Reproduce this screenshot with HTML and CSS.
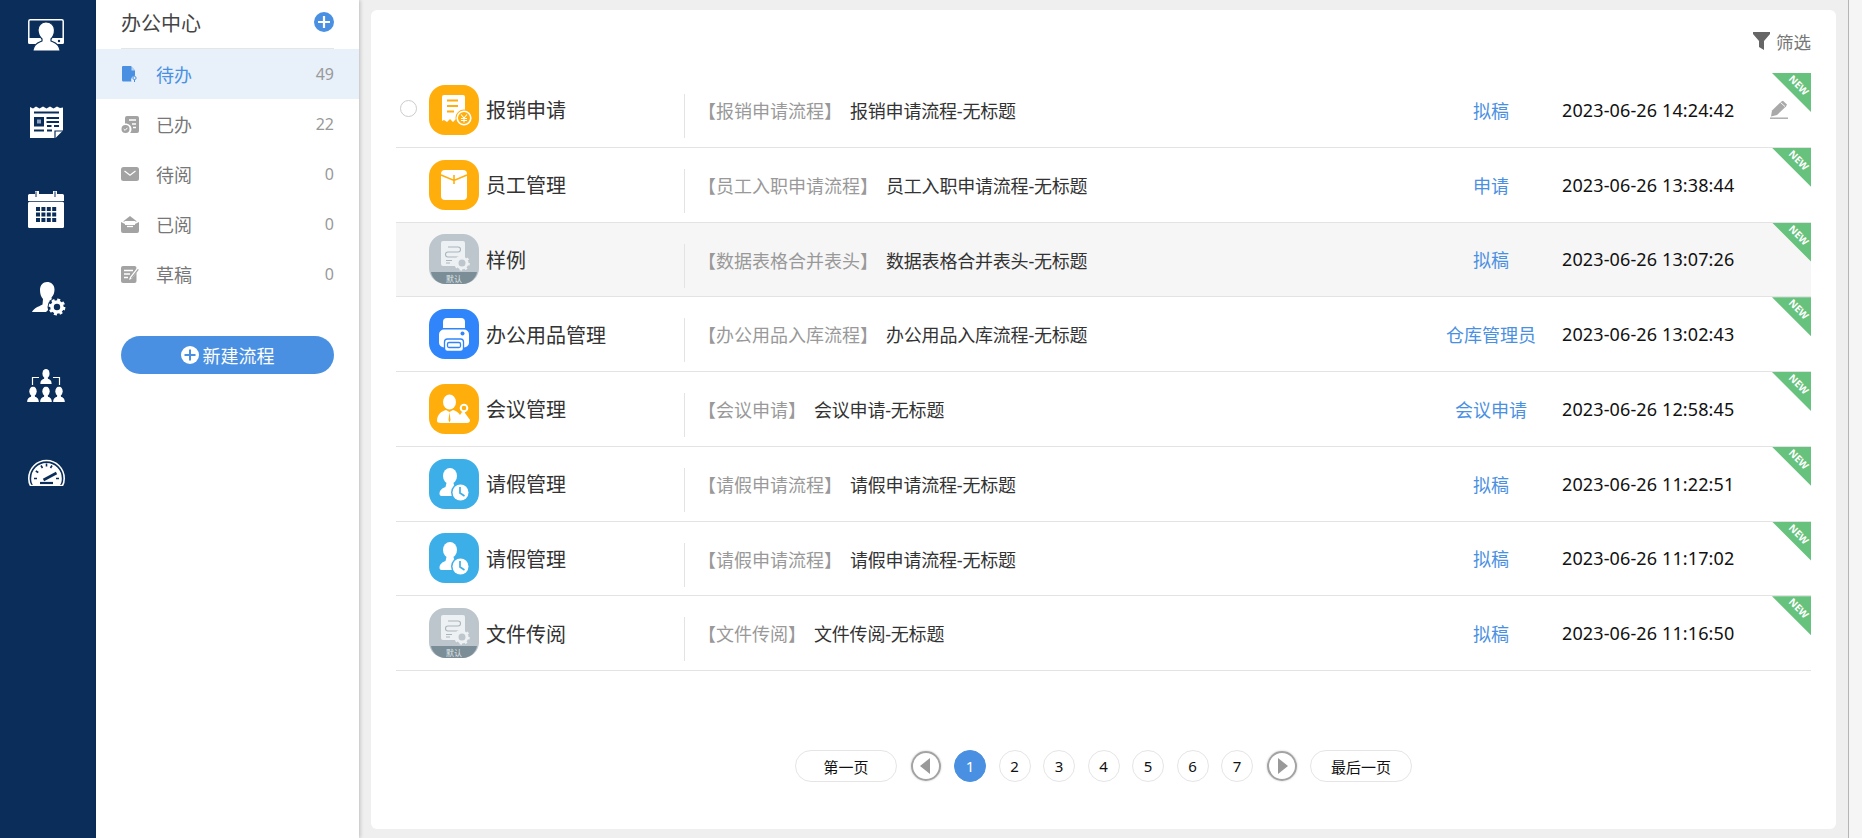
FILE: index.html
```html
<!DOCTYPE html>
<html lang="zh-CN">
<head>
<meta charset="utf-8">
<title>办公中心</title>
<link rel="stylesheet" href="styles.css">
</head>
<body>
<svg class="defs" xmlns="http://www.w3.org/2000/svg">
  <symbol id="i-receipt" viewBox="0 0 50 50">
    <rect width="50" height="50" rx="16" fill="#ffae0c"/>
    <path d="M13 12a2 2 0 0 1 2-2h19a2 2 0 0 1 2 2v24l-3-1-3 2-3-3-3 3-3-3-3 3-3-2-2 1z" fill="#fff"/>
    <path d="M18 15.500h11M18 21h11M18 26.500h7" stroke="#ffae0c" stroke-width="1.800" fill="none"/>
    <circle cx="35" cy="33" r="8.500" fill="#ffae0c"/><circle cx="35" cy="33" r="6.800" fill="none" stroke="#fff" stroke-width="1.600"/>
    <path d="M32 29.500l3 3.500 3-3.500M35 33v4.500M32 33.500h6M32 35.500h6" stroke="#fff" stroke-width="1.100" fill="none"/>
  </symbol>
  <symbol id="i-envelope" viewBox="0 0 50 50">
    <rect width="50" height="50" rx="16" fill="#ffae0c"/>
    <rect x="12" y="10" width="26" height="30" rx="4" fill="#fff"/>
    <path d="M12 15l13 5.500L38 15M25 15v9" stroke="#ffae0c" stroke-width="1.600" fill="none"/>
  </symbol>
  <symbol id="i-default" viewBox="0 0 50 50">
    <rect width="50" height="50" rx="16" fill="#bcc6cc"/>
    <path d="M2 38h46c-1 7-8 12-14 12H16C10 50 3 45 2 38z" fill="#7b8d96"/>
    <rect x="12" y="7" width="24" height="25" rx="2" fill="#eef1f3"/>
    <path d="M19 13h10a2.500 2.500 0 0 1 0 5H19a2.500 2.500 0 0 0 0 5h11M17 26.500h6M17 29h4" stroke="#a9b6bd" stroke-width="1.100" fill="none"/>
    <circle cx="33" cy="29" r="5" fill="#bcc6cc" stroke="#eef1f3" stroke-width="3"/>
    <circle cx="33" cy="29" r="6.800" fill="none" stroke="#eef1f3" stroke-width="2" stroke-dasharray="2.400 2.900"/>
    <text x="25" y="47.500" class="svg-label">默认</text>
  </symbol>
  <symbol id="i-printer" viewBox="0 0 50 50">
    <rect width="50" height="50" rx="16" fill="#3085fb"/>
    <path d="M14 19v-6a4 4 0 0 1 4-4h14a4 4 0 0 1 4 4v6z" fill="#fff"/>
    <rect x="10" y="20.500" width="30" height="18" rx="5" fill="#fff"/>
    <circle cx="33.500" cy="24.500" r="2" fill="#3085fb"/>
    <rect x="15.500" y="30" width="19" height="12.500" rx="3" fill="#fff" stroke="#3085fb" stroke-width="1.300"/>
    <rect x="18.500" y="33.500" width="13" height="5" rx="1.500" fill="#fff" stroke="#3085fb" stroke-width="1.300"/>
  </symbol>
  <symbol id="i-meeting" viewBox="0 0 50 50">
    <rect width="50" height="50" rx="16" fill="#ffae0c"/>
    <ellipse cx="20.500" cy="18" rx="6.500" ry="7.500" fill="#fff"/>
    <path d="M8 37c0-7 5-10 9-11l3.500 2 3.500-2c3 1 5 2 7 5l2-3 3 1 5 7c0 2-1 3-3 3H12c-3 0-4-1-4-2z" fill="#fff"/>
    <path d="M20.500 28l-1 8 1 2.500 1-2.500z" fill="#ffae0c"/>
    <circle cx="35" cy="24" r="3.300" fill="none" stroke="#fff" stroke-width="2"/>
    <path d="M35 27v5" stroke="#fff" stroke-width="2"/>
  </symbol>
  <symbol id="i-leave" viewBox="0 0 50 50">
    <rect width="50" height="50" rx="16" fill="#3cafe8"/>
    <ellipse cx="21" cy="17" rx="7" ry="8" fill="#fff"/>
    <path d="M10.500 35c0-4 3-6 6-7l1-4h7l1 4c3 1 4 2 4 4l-3 5H12.500c-1 0-2-1-2-2z" fill="#fff"/>
    <circle cx="31.500" cy="33.500" r="9.500" fill="#3cafe8"/><circle cx="31.500" cy="33.500" r="8" fill="#fff"/>
    <path d="M31 28v6l4.500 3" stroke="#3cafe8" stroke-width="1.700" fill="none"/>
  </symbol>
  <symbol id="i-person" viewBox="0 0 12 16">
    <ellipse cx="6" cy="5" rx="3.800" ry="5"/>
    <path d="M4 9h4v1.500c2 .8 4 1.500 4 5.500H0c0-4 2-4.700 4-5.500z"/>
  </symbol>
</svg>

<div class="app">
  <nav class="rail">
    <svg class="rail-icon ri-1" width="36" height="33" viewBox="0 0 36 33">
      <rect x=".8" y=".8" width="34.400" height="20" rx="1.500" fill="none" stroke="#fff" stroke-width="1.500"/>
      <path d="M0 19h36v4.500a1.500 1.500 0 0 1-1.500 1.500h-33A1.500 1.500 0 0 1 0 23.500z" fill="#fff"/>
      <circle cx="31" cy="22" r="1.200" fill="#0a2d5a"/>
      <path d="M18 3c5 0 8.500 3.500 8.500 8 0 4-1.500 7-3.500 9v2c2 1 8 2 9 9v1H5v-1c1-7 7-8 9-9v-2c-2-2-4-5-4-9 0-4.500 3.500-8 8-8z" fill="#fff" stroke="#0a2d5a" stroke-width="1.200"/>
    </svg>
    <svg class="rail-icon ri-2" width="33" height="32" viewBox="0 0 33 32">
      <path d="M0 1l3 1.500 3-2 3.500 2 3.500-2 3.500 2 3.500-2 3.500 2 3.500-2 3 1.500 3-.5v23l-8 8H1a1 1 0 0 1-1-1z" fill="#fff"/>
      <path d="M4 6.500h25M16.500 12h12.500M16.500 16h12.500M17 20h4.500M24 20h5M4 24.500h10M17 24.500h5" stroke="#0a2d5a" stroke-width="2" fill="none"/>
      <rect x="4" y="11" width="10" height="9.500" fill="#0a2d5a"/>
      <path d="M7 13.500h4v4H7z" fill="#8fa3bc"/>
      <path d="M25 32v-7h8" fill="none" stroke="#0a2d5a" stroke-width="1.200"/>
    </svg>
    <svg class="rail-icon ri-3" width="36" height="37" viewBox="0 0 36 37">
      <path d="M1.500 3H7V0h4v3h14V0h4v3h5.500A1.500 1.500 0 0 1 36 4.500V10H0V4.500A1.500 1.500 0 0 1 1.500 3z" fill="#fff"/>
      <rect y="10.800" width="36" height="26.200" rx="1.500" fill="#fff"/>
      <path d="M8 .5v5.500M27 .5v5.500" stroke="#0a2d5a" stroke-width="1"/>
      <g fill="#0a2d5a">
        <rect x="8" y="16" width="4" height="4"/><rect x="13.400" y="16" width="4" height="4"/><rect x="18.800" y="16" width="4" height="4"/><rect x="24.200" y="16" width="4" height="4"/>
        <rect x="8" y="21.500" width="4" height="4"/><rect x="13.400" y="21.500" width="4" height="4"/><rect x="18.800" y="21.500" width="4" height="4"/><rect x="24.200" y="21.500" width="4" height="4"/>
        <rect x="8" y="27" width="4" height="4"/><rect x="13.400" y="27" width="4" height="4"/><rect x="18.800" y="27" width="4" height="4"/><rect x="24.200" y="27" width="4" height="4"/>
      </g>
    </svg>
    <svg class="rail-icon ri-4" width="34" height="34" viewBox="0 0 34 34">
      <path d="M15 0c4 0 7.500 2.500 7.500 7.500 0 3-1 6-3 8l.5 3c1.500.5 3 1 4 2L14 30H1c-1 0-1-.5-.5-1 3-4 8-5 10-6.500l.5-5.500c-2-2-3-5-3-9C8 3 11 0 15 0z" fill="#fff"/>
      <circle cx="25" cy="25" r="9.500" fill="#0a2d5a"/>
      <circle cx="25" cy="25" r="5" fill="none" stroke="#fff" stroke-width="3.600"/>
      <circle cx="25" cy="25" r="7.200" fill="none" stroke="#fff" stroke-width="2.400" stroke-dasharray="3 2.650"/>
    </svg>
    <svg class="rail-icon ri-5" width="38" height="33" viewBox="0 0 38 33" fill="#fff">
      <use href="#i-person" x="13" y="0" width="12" height="15"/>
      <path d="M5.500 16V8.500H12M32.500 16V8.500H26" fill="none" stroke="#fff" stroke-width="1.200"/>
      <use href="#i-person" x="0" y="17.500" width="12" height="15.500"/>
      <use href="#i-person" x="13" y="17.500" width="12" height="15.500"/>
      <use href="#i-person" x="26" y="17.500" width="12" height="15.500"/>
    </svg>
    <svg class="rail-icon ri-6" width="37" height="27" viewBox="0 0 37 27">
      <path d="M2.500 26.500C1 24 .8 22 .8 19.500A17.700 18 0 0 1 36.200 19.500c0 2.500-.2 4.500-1.700 7z" fill="none" stroke="#fff" stroke-width="1.600"/>
      <path d="M5 26C3.500 24 3.200 22 3.200 19.500A15.300 15.500 0 0 1 33.800 19.500c0 2.500-.3 4.500-1.800 6.500z" fill="#fff"/>
      <path d="M6 19.500h3M7.800 12l2.500 1.500M13 6.500l1.500 2.500M18.500 4.500V7.500M24 6.500L22.500 9M31 19.500h-3" stroke="#0a2d5a" stroke-width="1.600" fill="none"/>
      <path d="M12 24h13" stroke="#0a2d5a" stroke-width="2.200"/>
      <path d="M15.500 21l13-7" stroke="#0a2d5a" stroke-width="2.600"/>
    </svg>
  </nav>

  <aside class="side">
    <header class="side-head">
      <span class="side-title">办公中心</span>
      <svg class="add-icon" width="20" height="20" viewBox="0 0 20 20"><circle cx="10" cy="10" r="10" fill="#4a90e2"/><path d="M10 4v12M4 10h12" stroke="#fff" stroke-width="2.200"/></svg>
    </header>
    <ul class="menu">
      <li class="menu-item is-active">
        <svg class="menu-icon" width="18" height="18" viewBox="0 0 18 18"><path d="M2 1h8l4 4.500v5.200a4 4 0 0 0-3.500 5.800H2.800A1.500 1.500 0 0 1 1 15V2a1 1 0 0 1 1-1z" fill="#4a90e2"/><path d="M10.500 1.500l3.500 4h-3.500z" fill="#b9d3f2"/><circle cx="13.500" cy="13" r="1.600" fill="none" stroke="#4a90e2" stroke-width="1"/><path d="M13.500 14.500v2.500" stroke="#4a90e2"/></svg>
        <span class="menu-label">待办</span><span class="menu-count">49</span>
      </li>
      <li class="menu-item">
        <svg class="menu-icon" width="18" height="18" viewBox="0 0 18 18"><path d="M6 1h10a2 2 0 0 1 2 2v13a2 2 0 0 1-2 2H9c1-1 1.500-2.500 1.500-4 0-3-2-5.500-6.500-5.500V3a2 2 0 0 1 2-2z" fill="#a3a3a3"/><path d="M8 5h7M11 9h4M12 12.500h3" stroke="#fff" stroke-width="1.300"/><circle cx="4.500" cy="14" r="4" fill="#a3a3a3"/><path d="M2.700 14l1.400 1.400 2.300-2.600" stroke="#fff" fill="none"/></svg>
        <span class="menu-label">已办</span><span class="menu-count">22</span>
      </li>
      <li class="menu-item">
        <svg class="menu-icon" width="18" height="18" viewBox="0 0 18 18"><rect y="2" width="18" height="14" rx="2.500" fill="#a3a3a3"/><path d="M3.500 6l5.500 4.200L14.500 6" stroke="#fff" stroke-width="1.200" fill="none"/></svg>
        <span class="menu-label">待阅</span><span class="menu-count">0</span>
      </li>
      <li class="menu-item">
        <svg class="menu-icon" width="18" height="18" viewBox="0 0 18 18"><path d="M2 6.500L9 1l7 5.500z" fill="#a3a3a3"/><path d="M0 7l4 2h10l4-2v9a2 2 0 0 1-2 2H2a2 2 0 0 1-2-2z" fill="#a3a3a3"/><rect x="4" y="6" width="10" height="4" fill="#fff"/><path d="M6 11.500h6" stroke="#fff" stroke-width="1.300"/></svg>
        <span class="menu-label">已阅</span><span class="menu-count">0</span>
      </li>
      <li class="menu-item">
        <svg class="menu-icon" width="18" height="18" viewBox="0 0 18 18"><rect y="1" width="15.500" height="17" rx="2" fill="#a3a3a3"/><path d="M3 5.500h9M3 9h6M3 12.500h4" stroke="#fff" stroke-width="1.300"/><path d="M8 15l1-3 7-9 2 1.500-7 9z" fill="#fff"/><path d="M9.800 13l7-9 1 .8-7 9z" fill="#a3a3a3"/></svg>
        <span class="menu-label">草稿</span><span class="menu-count">0</span>
      </li>
    </ul>
    <button class="new-flow" type="button">
      <svg width="18" height="18" viewBox="0 0 18 18"><circle cx="9" cy="9" r="9" fill="#fff"/><path d="M9 3.500v11M3.500 9h11" stroke="#4a90e2" stroke-width="2"/></svg>
      <span>新建流程</span>
    </button>
  </aside>

  <main class="main">
    <section class="card">
      <div class="toolbar">
        <svg width="17" height="18" viewBox="0 0 17 18"><path d="M0 0h17v2L11 9v9l-5-3V9L0 2z" fill="#666"/></svg>
        <span class="filter-label">筛选</span>
      </div>

      <div class="rows">
        <article class="row">
          <span class="radio"></span>
          <svg class="app-icon"><use href="#i-receipt"/></svg>
          <span class="app-name">报销申请</span>
          <div class="subject"><span class="tag">【报销申请流程】</span><span class="title">报销申请流程-无标题</span></div>
          <span class="status">拟稿</span>
          <time class="date">2023-06-26 14:24:42</time>
          <svg class="edit" width="18" height="19" viewBox="0 0 18 19"><path d="M2 10.500L11 1.800 13 .8l4 3.600-1 2-9 8.600-6 1.500z" fill="#a9a9a9"/><path d="M10.500 2.500l4.500 4" stroke="#fff" stroke-width=".9"/><path d="M0 18.200h18" stroke="#a9a9a9" stroke-width="1.400"/></svg>
          <span class="badge"><span class="badge-text">NEW</span></span>
        </article>
        <article class="row">
          <span class="radio-space"></span>
          <svg class="app-icon"><use href="#i-envelope"/></svg>
          <span class="app-name">员工管理</span>
          <div class="subject"><span class="tag">【员工入职申请流程】</span><span class="title">员工入职申请流程-无标题</span></div>
          <span class="status">申请</span>
          <time class="date">2023-06-26 13:38:44</time>
          <span class="edit-space"></span>
          <span class="badge"><span class="badge-text">NEW</span></span>
        </article>
        <article class="row is-hover">
          <span class="radio-space"></span>
          <svg class="app-icon"><use href="#i-default"/></svg>
          <span class="app-name">样例</span>
          <div class="subject"><span class="tag">【数据表格合并表头】</span><span class="title">数据表格合并表头-无标题</span></div>
          <span class="status">拟稿</span>
          <time class="date">2023-06-26 13:07:26</time>
          <span class="edit-space"></span>
          <span class="badge"><span class="badge-text">NEW</span></span>
        </article>
        <article class="row">
          <span class="radio-space"></span>
          <svg class="app-icon"><use href="#i-printer"/></svg>
          <span class="app-name">办公用品管理</span>
          <div class="subject"><span class="tag">【办公用品入库流程】</span><span class="title">办公用品入库流程-无标题</span></div>
          <span class="status">仓库管理员</span>
          <time class="date">2023-06-26 13:02:43</time>
          <span class="edit-space"></span>
          <span class="badge"><span class="badge-text">NEW</span></span>
        </article>
        <article class="row">
          <span class="radio-space"></span>
          <svg class="app-icon"><use href="#i-meeting"/></svg>
          <span class="app-name">会议管理</span>
          <div class="subject"><span class="tag">【会议申请】</span><span class="title">会议申请-无标题</span></div>
          <span class="status">会议申请</span>
          <time class="date">2023-06-26 12:58:45</time>
          <span class="edit-space"></span>
          <span class="badge"><span class="badge-text">NEW</span></span>
        </article>
        <article class="row">
          <span class="radio-space"></span>
          <svg class="app-icon"><use href="#i-leave"/></svg>
          <span class="app-name">请假管理</span>
          <div class="subject"><span class="tag">【请假申请流程】</span><span class="title">请假申请流程-无标题</span></div>
          <span class="status">拟稿</span>
          <time class="date">2023-06-26 11:22:51</time>
          <span class="edit-space"></span>
          <span class="badge"><span class="badge-text">NEW</span></span>
        </article>
        <article class="row">
          <span class="radio-space"></span>
          <svg class="app-icon"><use href="#i-leave"/></svg>
          <span class="app-name">请假管理</span>
          <div class="subject"><span class="tag">【请假申请流程】</span><span class="title">请假申请流程-无标题</span></div>
          <span class="status">拟稿</span>
          <time class="date">2023-06-26 11:17:02</time>
          <span class="edit-space"></span>
          <span class="badge"><span class="badge-text">NEW</span></span>
        </article>
        <article class="row">
          <span class="radio-space"></span>
          <svg class="app-icon"><use href="#i-default"/></svg>
          <span class="app-name">文件传阅</span>
          <div class="subject"><span class="tag">【文件传阅】</span><span class="title">文件传阅-无标题</span></div>
          <span class="status">拟稿</span>
          <time class="date">2023-06-26 11:16:50</time>
          <span class="edit-space"></span>
          <span class="badge"><span class="badge-text">NEW</span></span>
        </article>
      </div>

      <div class="pager">
        <a class="page-btn page-wide">第一页</a>
        <a class="page-arrow"><svg width="30" height="30" viewBox="0 0 30 30"><path d="M19 7v16L9 15z" fill="#999"/></svg></a>
        <div class="page-nums">
          <a class="page-btn is-current">1</a>
          <a class="page-btn">2</a>
          <a class="page-btn">3</a>
          <a class="page-btn">4</a>
          <a class="page-btn">5</a>
          <a class="page-btn">6</a>
          <a class="page-btn">7</a>
        </div>
        <a class="page-arrow"><svg width="30" height="30" viewBox="0 0 30 30"><path d="M11 7v16l10-8z" fill="#999"/></svg></a>
        <a class="page-btn page-wide">最后一页</a>
      </div>
    </section>
  </main>
  <div class="edge"></div>
</div>
</body>
</html>
```

FILE: styles.css
```css
* { box-sizing: border-box; }
html, body { margin: 0; height: 100%; overflow: hidden; }
body { font-family: "Noto Sans", "Noto Sans CJK SC", sans-serif; color: #333; background: #efefef; }
ul { list-style: none; margin: 0; padding: 0; }
.defs { display: none; }
.svg-label { font-family: "Noto Sans CJK SC", sans-serif; font-size: 8px; fill: #dfe5e8; text-anchor: middle; }

.app { display: flex; height: 838px; }

/* left rail */
.rail { width: 96px; flex: none; background: #0a2d5a; display: flex; flex-direction: column; align-items: flex-start; }
.rail-icon { display: block; flex: none; }
.ri-1 { margin: 19px 0 0 28px; }
.ri-2 { margin: 54px 0 0 30px; }
.ri-3 { margin: 53px 0 0 28px; }
.ri-4 { margin: 54px 0 0 32px; }
.ri-5 { margin: 53px 0 0 27px; }
.ri-6 { margin: 57px 0 0 28px; }

/* secondary menu */
.side { width: 263px; flex: none; background: #fff; box-shadow: 1px 0 4px rgba(0, 0, 0, .22); position: relative; }
.side-head { height: 49px; margin: 0 25px; display: flex; justify-content: space-between; border-bottom: 1px solid #e5e5e5; }
.side-title { font-size: 20px; line-height: 48px; color: #444; }
.add-icon { margin-top: 12px; }
.menu-item { height: 50px; padding: 0 25px; display: flex; align-items: center; color: #777; }
.menu-item.is-active { background: #e8f0fa; color: #4a90e2; }
.menu-icon { flex: none; }
.menu-label { font-size: 18px; margin-left: 17px; flex: 1; }
.menu-count { font-size: 16px; color: #999; }
.new-flow { display: flex; align-items: center; justify-content: center; gap: 4px; width: 213px; height: 38px; margin: 37px 0 0 25px; padding: 0; border: 0; border-radius: 19px; background: #4a90e2; color: #fff; font: inherit; font-size: 18px; }

/* main */
.main { flex: 1; min-width: 0; padding: 10px 12px 9px 12px; }
.card { height: 100%; background: #fff; border-radius: 6px; padding: 0 25px; }
.toolbar { height: 63px; display: flex; justify-content: flex-end; align-items: center; gap: 6px; color: #777; padding-bottom: 1px; }
.filter-label { font-size: 17.500px; width: 35px; white-space: nowrap; }

.rows { display: flex; flex-direction: column; }
.row { position: relative; height: 74.750px; display: grid; grid-template-columns: 33px 50px 205px 1fr 100px 195px 75px; align-items: center; border-bottom: 1px solid #e3e3e3; overflow: hidden; }
.row.is-hover { background: #f6f6f6; }
.radio { width: 17px; height: 17px; margin: -3px 0 0 4px; border: 1px solid #ccc; border-radius: 50%; }
.radio-space, .edit-space { display: block; }
.app-icon { width: 50px; height: 50px; display: block; }
.app-name { font-size: 20px; padding-left: 7px; color: #333; white-space: nowrap; }
.subject { align-self: start; height: 44px; margin-top: 21px; padding-left: 13px; border-left: 1px solid #e3e3e3; font-size: 18px; line-height: 34px; white-space: nowrap; }
.tag { color: #999; }
.title { margin-left: 8px; color: #333; letter-spacing: -.2px; }
.status { font-size: 18px; text-align: center; color: #4a90e2; white-space: nowrap; }
.date { font-size: 18px; padding-left: 21px; color: #111; white-space: nowrap; letter-spacing: .12px; }
.edit { margin: 0 0 0 34px; }
.badge { position: absolute; top: 0; right: 0; width: 39px; height: 39px; }
.badge::before { content: ""; position: absolute; inset: 0; background: #66c27c; clip-path: polygon(0 0, 100% 0, 100% 100%); }
.badge-text { position: absolute; left: 15px; top: 6px; width: 24px; text-align: center; color: #fff; font-size: 10px; font-weight: 700; line-height: 12px; transform: rotate(45deg); font-family: "Open Sans", sans-serif; }

/* pager */
.pager { display: flex; align-items: center; justify-content: center; gap: 13.500px; margin-top: 79px; height: 32px; }
.page-nums { display: flex; gap: 12.500px; }
.page-btn { width: 32px; height: 32px; flex: none; display: flex; align-items: center; justify-content: center; border: 1px solid #e5e5e5; border-radius: 50%; background: #fff; color: #111; font-size: 15px; white-space: nowrap; }
.page-btn.page-wide { width: 102px; border-radius: 16px; }
.page-btn.is-current { background: #4a90e2; border-color: #4a90e2; color: #fff; }
.page-arrow { width: 30px; height: 30px; flex: none; border: 2px solid #a3a3a3; border-radius: 50%; box-shadow: 0 0 2px rgba(0, 0, 0, .25); display: flex; align-items: center; justify-content: center; overflow: hidden; }
.page-arrow svg { flex: none; }

.edge { width: 14px; flex: none; background: #f5f5f5; border-left: 1px solid #b5b5b5; }
```
